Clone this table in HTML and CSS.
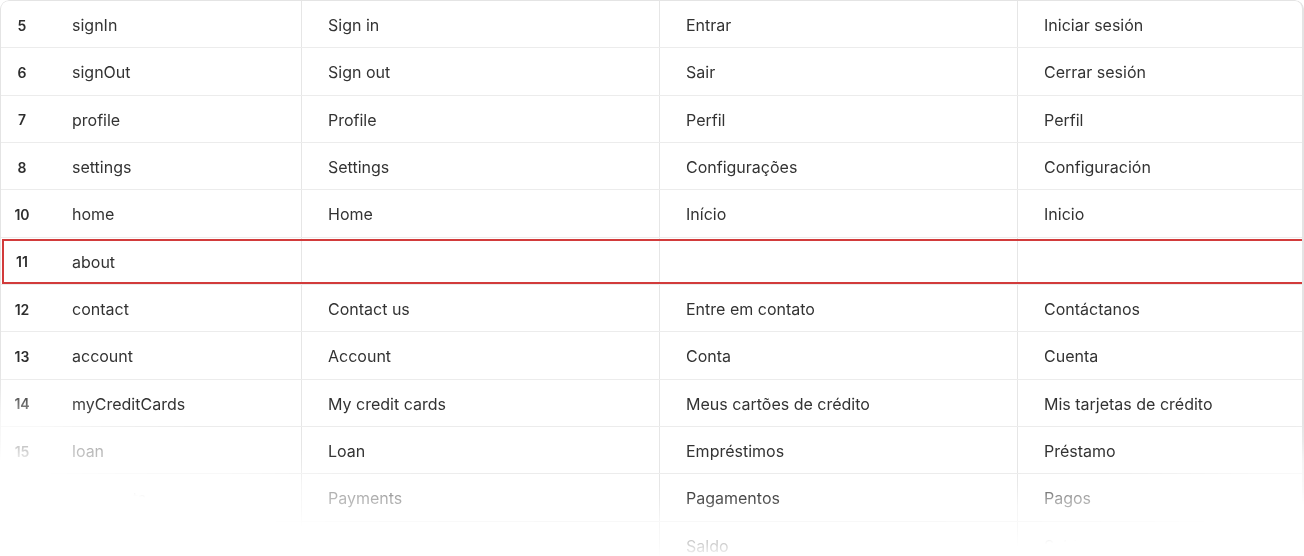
FILE: index.html
```html
<!DOCTYPE html>
<html lang="en">
<head>
<meta charset="utf-8">
<title>Translations</title>
<link rel="stylesheet" href="styles.css">
</head>
<body>
<div class="table">
  <div class="row"><div class="c0"><span class="num">5</span><span class="key">signIn</span></div><div class="cell">Sign in</div><div class="cell">Entrar</div><div class="cell">Iniciar sesión</div></div>
  <div class="row"><div class="c0"><span class="num">6</span><span class="key">signOut</span></div><div class="cell">Sign out</div><div class="cell">Sair</div><div class="cell">Cerrar sesión</div></div>
  <div class="row"><div class="c0"><span class="num">7</span><span class="key">profile</span></div><div class="cell">Profile</div><div class="cell">Perfil</div><div class="cell">Perfil</div></div>
  <div class="row"><div class="c0"><span class="num">8</span><span class="key">settings</span></div><div class="cell">Settings</div><div class="cell">Configurações</div><div class="cell">Configuración</div></div>
  <div class="row"><div class="c0"><span class="num">10</span><span class="key">home</span></div><div class="cell">Home</div><div class="cell">Início</div><div class="cell">Inicio</div></div>
  <div class="row selected"><div class="c0"><span class="num">11</span><span class="key">about</span></div><div class="cell"></div><div class="cell"></div><div class="cell"></div></div>
  <div class="row"><div class="c0"><span class="num">12</span><span class="key">contact</span></div><div class="cell">Contact us</div><div class="cell">Entre em contato</div><div class="cell">Contáctanos</div></div>
  <div class="row"><div class="c0"><span class="num">13</span><span class="key">account</span></div><div class="cell">Account</div><div class="cell">Conta</div><div class="cell">Cuenta</div></div>
  <div class="row"><div class="c0"><span class="num">14</span><span class="key">myCreditCards</span></div><div class="cell">My credit cards</div><div class="cell">Meus cartões de crédito</div><div class="cell">Mis tarjetas de crédito</div></div>
  <div class="row"><div class="c0"><span class="num">15</span><span class="key">loan</span></div><div class="cell">Loan</div><div class="cell">Empréstimos</div><div class="cell">Préstamo</div></div>
  <div class="row"><div class="c0"><span class="num">16</span><span class="key">payments</span></div><div class="cell">Payments</div><div class="cell">Pagamentos</div><div class="cell">Pagos</div></div>
  <div class="row"><div class="c0"><span class="num">17</span><span class="key">balance</span></div><div class="cell">Balance</div><div class="cell">Saldo</div><div class="cell">Saldo</div></div>
</div>
</body>
</html>
```

FILE: styles.css
```css
html, body {
  margin: 0;
  padding: 0;
  background: #ffffff;
  overflow: hidden;
}

body {
  width: 1304px;
  height: 556px;
  font-family: Inter, "Noto Sans", sans-serif;
  color: #333333;
}

.table {
  width: 1304px;
  box-sizing: border-box;
  border: 1px solid #e4e4e4;
  border-right-width: 2px;
  border-bottom: none;
  border-radius: 9px 9px 0 0;
  -webkit-mask-image: radial-gradient(ellipse 1400px 600px at 740px 0px, #000 0%, #000 81%, rgba(0,0,0,0.85) 83.5%, rgba(0,0,0,0.4) 86.7%, rgba(0,0,0,0.25) 90.5%, transparent 93.3%);
  mask-image: radial-gradient(ellipse 1400px 600px at 740px 0px, #000 0%, #000 81%, rgba(0,0,0,0.85) 83.5%, rgba(0,0,0,0.4) 86.7%, rgba(0,0,0,0.25) 90.5%, transparent 93.3%);
}

.row {
  display: grid;
  grid-template-columns: 300px 358px 358px 1fr;
  height: 47.33px;
  box-sizing: border-box;
  border-bottom: 1px solid #ececec;
  position: relative;
}

.c0 {
  display: flex;
  align-items: center;
  padding-top: 2px;
}

.num {
  width: 42px;
  text-align: center;
  font-size: 14px;
  font-weight: 600;
  color: #2e2e2e;
}

.key {
  margin-left: 29px;
  font-size: 16px;
}

.cell {
  display: flex;
  align-items: center;
  border-left: 1px solid #e6e6e6;
  padding-left: 26px;
  padding-top: 2px;
  font-size: 16px;
  white-space: nowrap;
}

.row.selected::after {
  content: "";
  position: absolute;
  left: 1px;
  right: 0;
  top: 1px;
  bottom: 0;
  border: 2px solid #d23b3b;
  border-right: none;
  pointer-events: none;
}
```
